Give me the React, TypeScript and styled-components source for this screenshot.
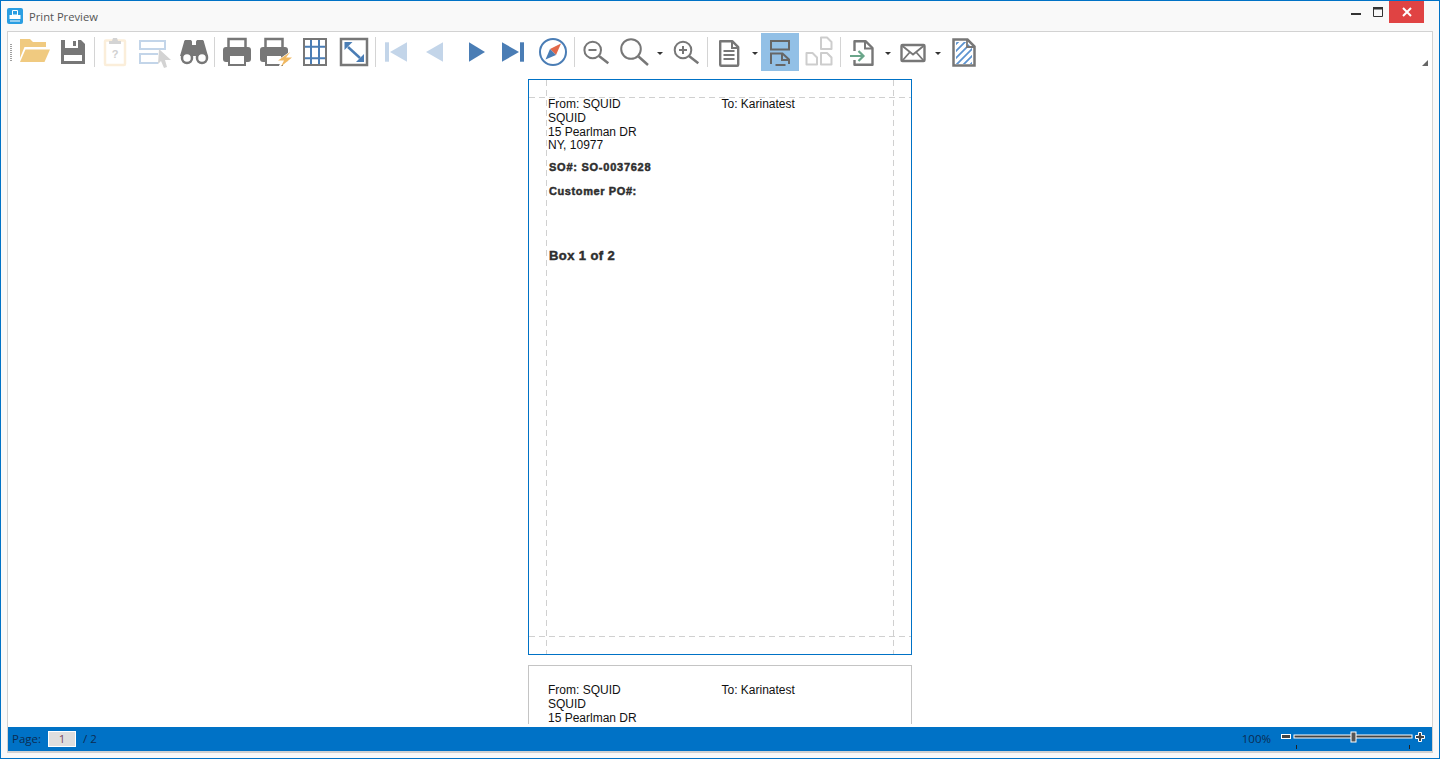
import React from "react";
import styled, { createGlobalStyle } from "styled-components";

const Global = createGlobalStyle`
  html, body { margin: 0; padding: 0; height: 100%; overflow: hidden; background: #f9f9f9; }
  * { box-sizing: border-box; }
`;

const Win = styled.div`
  width: 1440px; height: 759px; display: flex; flex-direction: column;
  border: 1px solid #0072c6; background: #f9f9f9; font-family: "Liberation Sans", Arial, sans-serif;
`;
const TitleBar = styled.div`
  height: 30px; flex: none; display: flex; align-items: flex-start; padding-left: 6px;
`;
const AppIcon = styled.svg`
  width: 16px; height: 16px; margin-top: 7px; flex: none;
`;
const TitleText = styled.div`
  margin: 8px 0 0 6px; font: 11.2px/16px "Open Sans", sans-serif; color: #555; flex: 1;
`;
const WinBtn = styled.div<{ $w: number; $red?: boolean }>`
  width: ${(p) => p.$w}px; height: 22px; flex: none; display: flex; align-items: center; justify-content: center;
  background: ${(p) => (p.$red ? "#e04343" : "transparent")};
`;
const WinControls = styled.div`
  display: flex; margin-right: 15px;
`;
const Panel = styled.div`
  flex: 1; min-height: 0; margin: 0 6px 5px 6px; display: flex; flex-direction: column;
  background: #fff; border: 1px solid #d2d2d2; border-bottom-width: 2px; position: relative;
`;
const Toolbar = styled.div`
  height: 43px; flex: none; display: flex; align-items: flex-start; padding-top: 1px; position: relative;
`;
const Grip = styled.div`
  width: 2px; height: 17px; margin: 11px 4px 0 2px; flex: none;
  background: repeating-linear-gradient(to bottom, #a0a0a0 0 1px, transparent 1px 2px);
`;
const ToolBtn = styled.div<{ $w: number; $ml?: number; $active?: boolean }>`
  width: ${(p) => p.$w}px; height: 38px; flex: none; display: flex; align-items: center; justify-content: center;
  margin-left: ${(p) => p.$ml ?? 0}px;
  background: ${(p) => (p.$active ? "#92c0e6" : "transparent")};
`;
const Sep = styled.div<{ $w: number }>`
  width: ${(p) => p.$w}px; height: 30px; margin-top: 4px; flex: none; display: flex; justify-content: center;
  &::before { content: ""; width: 1px; background: #d4d4d4; }
`;
const Caret = styled.div<{ $w: number }>`
  width: ${(p) => p.$w}px; height: 38px; flex: none; display: flex; align-items: center; justify-content: center;
  &::before { content: ""; border: 3px solid transparent; border-top: 3px solid #333; border-bottom: 0; margin-top: 2px; }
`;
const ToolIcon = styled.svg`
  width: 36px; height: 36px; flex: none; overflow: visible;
`;
const OverflowMark = styled.div`
  position: absolute; right: 4px; top: 28px; width: 0; height: 0;
  border-left: 6px solid transparent; border-bottom: 6px solid #666;
`;
const Viewer = styled.div`
  flex: 1; min-height: 0; margin-bottom: 3px; overflow: hidden; display: flex; flex-direction: column; align-items: center;
  padding-top: 4px; gap: 10px; background: #fff;
`;
const Page = styled.div<{ $selected?: boolean }>`
  width: 384px; height: 576px; flex: none; position: relative; background: #fff;
  border: 1px solid ${(p) => (p.$selected ? "#0072c6" : "#c4c4c4")};
  padding: 18px 19px 0 19px; color: #111; font-size: 12px; line-height: 13.8px;
`;
const GuideH = styled.div<{ $at: number }>`
  position: absolute; left: 0; right: 0; top: ${(p) => p.$at}px; height: 1px;
  background: repeating-linear-gradient(to right, #d0d0d0 0 6px, transparent 6px 10px);
`;
const GuideV = styled.div<{ $at: number }>`
  position: absolute; top: 0; bottom: 0; left: ${(p) => p.$at}px; width: 1px;
  background: repeating-linear-gradient(to bottom, #d0d0d0 0 6px, transparent 6px 10px);
`;
const AddressRow = styled.div`
  display: grid; grid-template-columns: 173.500px 1fr;
`;
const Line = styled.div`
  white-space: nowrap;
`;
const BoldLine = styled.div<{ $top: number; $size: number; $sp: number }>`
  margin-top: ${(p) => p.$top}px; margin-left: 1px; font-weight: 700; font-size: ${(p) => p.$size}px; line-height: 14px;
  letter-spacing: ${(p) => p.$sp}px; color: #2e2e2e; -webkit-text-stroke: 0.45px #2e2e2e; white-space: nowrap;
`;
const StatusBar = styled.div`
  height: 24px; flex: none; background: #0072c6; display: flex; align-items: center; padding: 0 7px 0 4px;
  font: 11.5px/16px "Open Sans", sans-serif; color: #0c2c52;
`;
const PageInput = styled.div`
  width: 28px; height: 16px; margin: 0 7px; border: 1px solid #fff; background: #dedede; text-align: center;
  line-height: 14px; color: #7a4a60;
`;
const Spacer = styled.div`
  flex: 1;
`;
const ZoomLabel = styled.span`
  margin-right: 9px;
`;
const ZoomSvg = styled.svg`
  width: 145px; height: 24px; flex: none;
`;

const G = "#777777";
const B = "#4a7db5";
const LB = "#c3d5e9";

const I = ({ children }: { children: React.ReactNode }) => (
  <ToolIcon viewBox="0 0 36 36">{children}</ToolIcon>
);

const Folder = () => (
  <I>
    <path d="M3 5h10l3 3h13v5H7.500L3 24z" fill="#f0ca80" />
    <path d="M8.500 15.500H33L27.500 28H3z" fill="#f0ca80" />
  </I>
);
const Save = () => (
  <I>
    <path d="M6 6h20l4 4v20H6z" fill={G} />
    <rect x="10" y="6" width="13" height="8" fill="#fff" />
    <rect x="18" y="7" width="3" height="5" fill={G} />
    <rect x="9" y="21" width="18" height="6" fill="#fff" />
  </I>
);
const Clipboard = () => (
  <I>
    <rect x="8" y="6.500" width="20" height="24.500" rx="1" fill="#fff" stroke="#fbeeda" strokeWidth="2.500" />
    <path d="M12 10V7h3l1-3h4l1 3h3v3z" fill="#d4d4d4" />
    <text x="18" y="24" textAnchor="middle" fontSize="11" fontWeight="700" fill="#d0d0d0" fontFamily="Liberation Sans">?</text>
  </I>
);
const Select = () => (
  <I>
    <rect x="3" y="7" width="25" height="8" fill="none" stroke={LB} strokeWidth="2" />
    <path d="M21 20H3v9h18" fill="none" stroke={LB} strokeWidth="2" />
    <path d="M22 15l12 11h-6l2 7-3 1-3-7-3 3z" fill="#d3d3d3" />
  </I>
);
const Binoculars = () => (
  <I>
    <path d="M8 8c0-1.500 1-2 2-2h4c1 0 2 .5 2 2v3h4V8c0-1.500 1-2 2-2h4c1 0 2 .5 2 2l4 14H4z" fill={G} />
    <circle cx="11" cy="24" r="5" fill="#fff" stroke={G} strokeWidth="2.500" />
    <circle cx="26" cy="24" r="5" fill="#fff" stroke={G} strokeWidth="2.500" />
  </I>
);
const Printer = ({ dx = 0 }: { dx?: number }) => (
  <g transform={`translate(${dx} 0)`}>
    <rect x="9.500" y="5" width="17" height="10" fill="none" stroke={G} strokeWidth="2.500" />
    <rect x="4" y="13" width="28" height="15" rx="3" fill={G} />
    <rect x="10" y="21" width="16" height="10" fill="#fff" stroke={G} strokeWidth="2" />
  </g>
);
const Print = () => (
  <I>
    <Printer />
  </I>
);
const PrintFlash = () => (
  <I>
    <Printer dx={-1} />
    <path d="M34.500 16.500L18.500 27.500h5.500l-3 6.500 16-11.500h-6l4-6z" fill="#fff" />
    <path d="M33.300 18L21 26.500h6L24 32.500l11-9h-6z" fill="#f0b860" />
  </I>
);
const GridIcon = () => (
  <I>
    <path d="M14 5v26M22 5v26M7 12.700h22M7 24.300h22" stroke={B} strokeWidth="2" />
    <rect x="7" y="5" width="22" height="26" fill="none" stroke={G} strokeWidth="2" />
  </I>
);
const Expand = () => (
  <I>
    <rect x="5" y="5" width="26" height="26" fill="none" stroke={G} strokeWidth="2.500" />
    <path d="M12 13l12 11" stroke={B} strokeWidth="2.500" />
    <path d="M8.500 8h8l-8 8zM28 28h-8l8-8z" fill={B} />
  </I>
);
const First = () => (
  <I>
    <rect x="6" y="8.300" width="4" height="19.400" fill={LB} />
    <path d="M28 8.300v19.400L11 18z" fill={LB} />
  </I>
);
const Prev = () => (
  <I>
    <path d="M27 8.300v19.400L10 18z" fill={LB} />
  </I>
);
const Next = () => (
  <I>
    <path d="M10 8.300v19.400L26 18z" fill={B} />
  </I>
);
const Last = () => (
  <I>
    <path d="M7 8.300v19.400L24 18z" fill={B} />
    <rect x="25" y="8.300" width="4" height="19.400" fill={B} />
  </I>
);
const Compass = () => (
  <I>
    <circle cx="18" cy="18" r="13" fill="#fff" stroke={B} strokeWidth="2" />
    <path d="M26 9.500L21 21l-6-6z" fill="#e2694a" />
    <path d="M10.500 25.500L15 15l6 6z" fill={B} />
  </I>
);
const ZoomOut = () => (
  <I>
    <circle cx="13.700" cy="16" r="8.300" fill="none" stroke={G} strokeWidth="2" />
    <path d="M20 22l9.300 7.300" stroke={G} strokeWidth="2.500" />
    <path d="M9.500 16h8" stroke={G} strokeWidth="2" />
  </I>
);
const ZoomGlass = () => (
  <I>
    <circle cx="14" cy="15" r="9.800" fill="none" stroke={G} strokeWidth="2" />
    <path d="M21.500 22.500l9.500 8.500" stroke={G} strokeWidth="2.500" />
  </I>
);
const ZoomIn = () => (
  <I>
    <circle cx="15" cy="16" r="8.300" fill="none" stroke={G} strokeWidth="2" />
    <path d="M21 22l9.300 7.300" stroke={G} strokeWidth="2.500" />
    <path d="M11 16h8M15 12v8" stroke={G} strokeWidth="2" />
  </I>
);
const Doc = () => (
  <I>
    <path d="M9.200 7.200h12l6 6v17.600a1 1 0 0 1-1 1h-16a1 1 0 0 1-1-1z" fill="#fff" stroke={G} strokeWidth="2.400" strokeLinejoin="round" />
    <path d="M21 7v7h6" fill="none" stroke={G} strokeWidth="2" />
    <path d="M12.500 17h11M12.500 21h11M12.500 25h11" stroke={G} strokeWidth="2" />
  </I>
);
const OnePage = () => (
  <I>
    <rect x="9" y="7" width="18" height="8.500" fill="none" stroke="#666" strokeWidth="2" />
    <path d="M9 30V19.500h11.500L27 25.500V30" fill="none" stroke="#666" strokeWidth="2" />
    <path d="M20 19.500V26h7.500" fill="none" stroke="#666" strokeWidth="2" />
    <path d="M13.500 31h10" stroke="#666" strokeWidth="2" />
  </I>
);
const MultiPage = () => {
  const d = (x: number, y: number) => `M${x} ${y}h6l4.500 4.500V${y + 11.500}H${x}z`;
  return (
    <I>
      <path d={d(20, 3.500)} fill="none" stroke="#cdcdcd" strokeWidth="2" strokeLinejoin="round" />
      <path d={d(5.500, 19)} fill="none" stroke="#cdcdcd" strokeWidth="2" strokeLinejoin="round" />
      <path d={d(20, 19)} fill="none" stroke="#cdcdcd" strokeWidth="2" strokeLinejoin="round" />
    </I>
  );
};
const Export = () => (
  <I>
    <path d="M9.500 17V7.200h11l7 6.800v16.800h-18V26" fill="none" stroke={G} strokeWidth="2.400" strokeLinejoin="round" />
    <path d="M20 7v7.500h7.500" fill="none" stroke={G} strokeWidth="2" />
    <path d="M5 22h13M13.500 17l5 5-5 5" fill="none" stroke="#6aa68a" strokeWidth="2.200" />
  </I>
);
const Mail = () => (
  <I>
    <rect x="6.500" y="11" width="23" height="16" rx="1" fill="#fff" stroke={G} strokeWidth="2.400" />
    <path d="M7.500 12L18 20.500 28.500 12M7.500 26.500L15 18M28.500 26.500L21 18" fill="none" stroke={G} strokeWidth="1.800" />
  </I>
);
const Watermark = () => (
  <I>
    <clipPath id="wmclip">
      <path d="M10 8h10.500l5.500 6v16H10z" />
    </clipPath>
    <g clipPath="url(#wmclip)" stroke="#5c93d0" strokeWidth="1.800">
      <path d="M4 16L16 4M4 23L23 4M4 30L30 4M8 33L32 9M15 33L32 16M22 33L32 23" />
    </g>
    <path d="M7.500 5.500h14l7 7v19h-21z" fill="none" stroke={G} strokeWidth="2.500" />
    <path d="M21 5.500v7.500h7" fill="none" stroke={G} strokeWidth="1.800" />
  </I>
);

type Item =
  | { kind: "btn"; w: number; ml?: number; active?: boolean; icon: React.FC }
  | { kind: "sep"; w: number }
  | { kind: "caret"; w: number };

const btn = (w: number, icon: React.FC, ml?: number, active?: boolean): Item => ({ kind: "btn", w, icon, ml, active });
const sep = (w: number): Item => ({ kind: "sep", w });
const caret = (w: number): Item => ({ kind: "caret", w });

const items: Item[] = [
  btn(38, Folder), btn(38, Save), sep(5), btn(36, Clipboard), btn(44, Select), btn(34, Binoculars), sep(7),
  btn(38, Print), btn(38, PrintFlash), btn(42, GridIcon), btn(36, Expand), sep(6),
  btn(38, First), btn(36, Prev), btn(38, Next, 6), btn(34, Last), btn(38, Compass, 4), sep(5),
  btn(40, ZoomOut), btn(36, ZoomGlass), caret(14), btn(38, ZoomIn), sep(5),
  btn(38, Doc), caret(13), btn(38, OnePage, 0, true), btn(39, MultiPage), sep(5),
  btn(40, Export), caret(9), btn(42, Mail), caret(8), btn(44, Watermark),
];

const Address = ({ lines }: { lines: string[] }) => (
  <>
    <AddressRow>
      <Line>From: SQUID</Line>
      <Line>To: Karinatest</Line>
    </AddressRow>
    {lines.map((l) => (
      <Line key={l}>{l}</Line>
    ))}
  </>
);

export default function App() {
  return (
    <Win>
      <Global />
      <TitleBar>
        <AppIcon viewBox="0 0 16 16">
          <rect width="16" height="16" rx="2" fill="#2a9ee2" />
          <path d="M5.500 2.500h5V7h-5z" fill="none" stroke="#fff" strokeWidth="1" />
          <path d="M2.500 7h11v4h-11z" fill="#fff" />
          <path d="M3 12.500h10v1H3z" fill="#fff" />
        </AppIcon>
        <TitleText>Print Preview</TitleText>
        <WinControls>
          <WinBtn $w={22}>
            <svg width="10" height="10" viewBox="0 0 10 10"><rect y="6" width="10" height="2" fill="#333" /></svg>
          </WinBtn>
          <WinBtn $w={22}>
            <svg width="10" height="10" viewBox="0 0 10 10"><path d="M.5.500h9v9h-9z" fill="none" stroke="#333" /><rect width="10" height="2.500" fill="#333" /></svg>
          </WinBtn>
          <WinBtn $w={35} $red>
            <svg width="10" height="10" viewBox="0 0 10 10"><path d="M1 1l8 8M9 1l-8 8" stroke="#fff" strokeWidth="2" /></svg>
          </WinBtn>
        </WinControls>
      </TitleBar>
      <Panel>
        <Toolbar>
          <Grip />
          {items.map((it, i) => {
            if (it.kind === "sep") return <Sep key={i} $w={it.w} />;
            if (it.kind === "caret") return <Caret key={i} $w={it.w} />;
            const Icon = it.icon;
            return (
              <ToolBtn key={i} $w={it.w} $ml={it.ml} $active={it.active}>
                <Icon />
              </ToolBtn>
            );
          })}
          <OverflowMark />
        </Toolbar>
        <Viewer>
          <Page $selected>
            <GuideH $at={17} />
            <GuideH $at={556} />
            <GuideV $at={17} />
            <GuideV $at={364} />
            <Address lines={["SQUID", "15 Pearlman DR", "NY, 10977"]} />
            <BoldLine $top={7} $size={11} $sp={0.75}>SO#: SO-0037628</BoldLine>
            <BoldLine $top={10} $size={11} $sp={0.6}>Customer PO#:</BoldLine>
            <BoldLine $top={51} $size={13} $sp={0.4}>Box 1 of 2</BoldLine>
          </Page>
          <Page>
            <Address lines={["SQUID", "15 Pearlman DR"]} />
          </Page>
        </Viewer>
        <StatusBar>
          <span>Page:</span>
          <PageInput>1</PageInput>
          <span>/ 2</span>
          <Spacer />
          <ZoomLabel>100%</ZoomLabel>
          <ZoomSvg viewBox="0 0 145 24">
            <rect x="1.500" y="7.500" width="9" height="4" fill="#444" stroke="#fff" />
            <rect x="14" y="8" width="118" height="3" fill="#444" stroke="#fff" />
            <rect x="71" y="5" width="5" height="10" fill="#555" stroke="#fff" />
            <rect x="16" y="18" width="1" height="4" fill="#222" />
            <rect x="129" y="18" width="1" height="4" fill="#222" />
            <path d="M138.500 5.500h3v3h3v3h-3v3h-3v-3h-3v-3h3z" fill="#444" stroke="#fff" />
          </ZoomSvg>
        </StatusBar>
      </Panel>
    </Win>
  );
}
